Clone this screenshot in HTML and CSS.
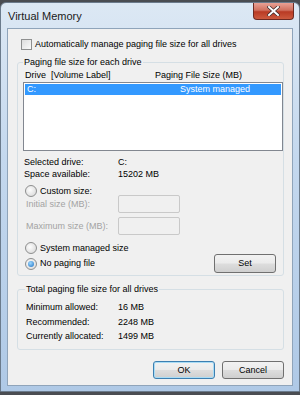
FILE: index.html
```html
<!DOCTYPE html>
<html>
  <head>
    <title>Virtual Memory</title>
    <link rel="stylesheet" href="styles.css">
  </head>
  <body>
    <div class="window">
      <div class="titlebar">
        <span class="title">Virtual Memory</span>
        <button type="button" class="close">
          <svg width="13" height="10" viewBox="0 0 13 10"><path d="M2 1 L11 9 M11 1 L2 9" stroke="#3a2a2a" stroke-width="3.4" stroke-linecap="square"/><path d="M2 1 L11 9 M11 1 L2 9" stroke="#fff" stroke-width="2" stroke-linecap="square"/></svg>
        </button>
      </div>

      <div class="client">
        <label class="check-row"><span class="checkbox"></span>Automatically manage paging file size for all drives</label>

        <fieldset class="group group-drives">
          <legend>Paging file size for each drive</legend>
          <div class="list-head">
            <span class="col-drive">Drive&nbsp;&nbsp;[Volume Label]</span>
            <span class="col-size">Paging File Size (MB)</span>
          </div>
          <div class="listbox">
            <div class="list-row selected">
              <span class="col-drive">C:</span>
              <span class="col-size">System managed</span>
            </div>
          </div>

          <div class="info">
            <span>Selected drive:</span><span>C:</span>
            <span>Space available:</span><span>15202 MB</span>
          </div>

          <label class="radio-row radio-custom"><span class="radio"></span>Custom size:</label>
          <div class="field-row disabled">
            <span>Initial size (MB):</span><span class="textbox"></span>
          </div>
          <div class="field-row disabled">
            <span>Maximum size (MB):</span><span class="textbox"></span>
          </div>
          <label class="radio-row radio-sys"><span class="radio"></span>System managed size</label>
          <div class="last-row">
            <label class="radio-row"><span class="radio checked"></span>No paging file</label>
            <button type="button" class="btn btn-set">Set</button>
          </div>
        </fieldset>

        <fieldset class="group group-total">
          <legend>Total paging file size for all drives</legend>
          <div class="totals">
            <span>Minimum allowed:</span><span>16 MB</span>
            <span>Recommended:</span><span>2248 MB</span>
            <span>Currently allocated:</span><span>1499 MB</span>
          </div>
        </fieldset>

        <div class="actions">
          <button type="button" class="btn btn-ok">OK</button>
          <button type="button" class="btn">Cancel</button>
        </div>
      </div>
    </div>
  </body>
</html>
```

FILE: styles.css
```css
body { margin: 0; background: #4a4d52; font-family: "Liberation Sans", Arial, sans-serif; font-size: 9px; line-height: 11px; color: #000; height: 395px; overflow: hidden; }

.window {
  margin-top: 2px;
  height: 390px;
  box-sizing: border-box;
  border: 1px solid #6b7b8c;
  border-radius: 6px 6px 0 0;
  background: linear-gradient(to bottom, #dce8f4 0%, #c4d8ee 40%, #afc9e6 100%);
  padding: 0 6px 5px 6px;
  display: flex;
  flex-direction: column;
}

.titlebar { height: 25px; display: flex; align-items: flex-start; justify-content: space-between; }
.title { font-size: 11px; line-height: 13px; margin-top: 7px; margin-left: 1px; color: #1a1a1a; }
.close {
  width: 41px; height: 17px; margin-right: -1px; margin-top: 0;
  border: 1px solid #6d2a22; border-top: none; border-radius: 0 0 4px 4px;
  background: linear-gradient(to bottom, #e9a195 0%, #d0705e 45%, #b93a24 55%, #cc5a3e 100%);
  display: flex; align-items: center; justify-content: center; padding: 0;
}

.client {
  flex: 1;
  background: #f0f0f0;
  border: 1px solid #8fa4ba;
  padding: 9px 8px 0 9px;
  display: flex;
  flex-direction: column;
}

.check-row { display: flex; align-items: center; gap: 3px; height: 12px; margin-left: 4px; }
.checkbox {
  width: 9px; height: 9px; border: 1px solid #8e8f8f; background: linear-gradient(135deg, #dcdcdc, #fafafa);
  display: inline-block;
}

.group {
  margin: 0; border: 1px solid #d5dfe5; border-radius: 3px;
  padding: 0 0 2px 6px; min-width: 0;
}
.group legend { padding: 0 1px; margin-left: -1px; line-height: 11px; }

.group-drives { margin-top: 7px; }
.list-head { display: flex; height: 14px; align-items: center; padding-left: 1px; }
.col-drive { width: 130px; }
.listbox { height: 69px; margin-left: -1px; border: 1px solid #828790; background: #fff; box-sizing: border-box; padding: 1px; }
.list-row { display: flex; height: 11px; align-items: center; padding-left: 2px; }
.list-row .col-drive { width: 153px; }
.selected { background: #3399ff; color: #fff; }

.info { display: grid; grid-template-columns: 94px auto; row-gap: 1px; margin-top: 6px; }

.radio-row { display: flex; align-items: center; gap: 3px; margin-left: 1px; }
.radio {
  width: 10px; height: 10px; border-radius: 50%; border: 1px solid #8e8f8f;
  background: radial-gradient(circle at 40% 40%, #fdfdfd, #d4d4d4);
  box-sizing: content-box; display: inline-block; position: relative;
}
.radio.checked::after {
  content: ""; position: absolute; left: 2px; top: 2px; width: 6px; height: 6px; border-radius: 50%;
  background: radial-gradient(circle at 40% 35%, #9fd9ff, #1b6fc2);
}
.radio-custom { height: 10px; margin-top: 6px; margin-bottom: -1px; }

.field-row { display: flex; align-items: flex-start; height: 22px; margin-left: 2px; }
.field-row span:first-child { width: 92px; line-height: 18px; }
.disabled { color: #a3a3a3; }
.textbox { width: 62px; height: 18px; border: 1px solid #c9c9c9; border-radius: 2px; background: #f0f0f0; box-sizing: border-box; }

.radio-sys { height: 15px; padding-top: 3px; box-sizing: border-box; }
.last-row { display: flex; align-items: center; justify-content: space-between; height: 19px; padding-right: 7px; }

.btn {
  font: inherit; width: 62px; height: 19px; padding: 0; color: #000;
  border: 1px solid #707070; border-radius: 3px;
  background: linear-gradient(to bottom, #f2f2f2 0%, #ebebeb 48%, #dddddd 52%, #cfcfcf 100%);
}

.group-total { margin-top: 8px; padding: 0 0 7px 8px; }
.totals { display: grid; grid-template-columns: 92px auto; row-gap: 3.5px; margin-top: 7px; }

.actions { display: flex; justify-content: flex-end; gap: 7px; margin-top: 11px; }
.btn-ok { border-color: #3c7fb1; box-shadow: inset 0 0 0 1px #a9dcf5; }
.actions .btn { height: 18px; }
```
